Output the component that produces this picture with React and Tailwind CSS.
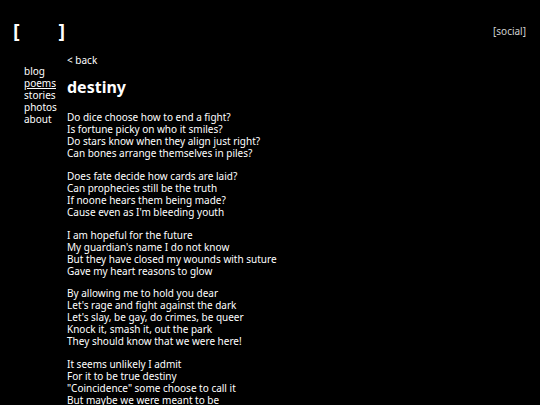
import React from 'react';

const stanzas = [
  [
    'Do dice choose how to end a fight?',
    'Is fortune picky on who it smiles?',
    'Do stars know when they align just right?',
    'Can bones arrange themselves in piles?',
  ],
  [
    'Does fate decide how cards are laid?',
    'Can prophecies still be the truth',
    'If noone hears them being made?',
    "Cause even as I'm bleeding youth",
  ],
  [
    'I am hopeful for the future',
    "My guardian's name I do not know",
    'But they have closed my wounds with suture',
    'Gave my heart reasons to glow',
  ],
  [
    'By allowing me to hold you dear',
    "Let's rage and fight against the dark",
    "Let's slay, be gay, do crimes, be queer",
    'Knock it, smash it, out the park',
    'They should know that we were here!',
  ],
  [
    'It seems unlikely I admit',
    'For it to be true destiny',
    '"Coincidence" some choose to call it',
    'But maybe we were meant to be',
  ],
];

const App = () => {
  return (
    <div className="min-h-screen bg-black text-white font-['Noto_Sans',sans-serif] text-[10px] leading-[12px]">
      {/* Header */}
      <div className="flex items-center justify-between pl-[13px] pr-[14px] pt-[16px] h-[46px]">
        <div className="flex w-[52px] justify-between text-[20px] font-bold leading-[24px] text-white">
          <span>[</span>
          <span>]</span>
        </div>
        <a className="text-[#d0d0d0]">[social]</a>
      </div>

      <div className="flex pl-[24px]">
        {/* Nav */}
        <nav className="w-[43px] pt-[19px] flex flex-col">
          <a>blog</a>
          <a className="underline">poems</a>
          <a>stories</a>
          <a>photos</a>
          <a>about</a>
        </nav>

        {/* Content */}
        <div className="pt-[8px]">
          <a>&lt; back</a>
          <h1 className="text-[16px] leading-[20px] font-bold mt-[11px] mb-[14px]">destiny</h1>
          <div className="flex flex-col gap-[10.75px]">
            {stanzas.map((lines, i) => (
              <p key={i}>
                {lines.map((line, j) => (
                  <span key={j} className="block">{line}</span>
                ))}
              </p>
            ))}
          </div>
        </div>
      </div>
    </div>
  );
};

export default App;
